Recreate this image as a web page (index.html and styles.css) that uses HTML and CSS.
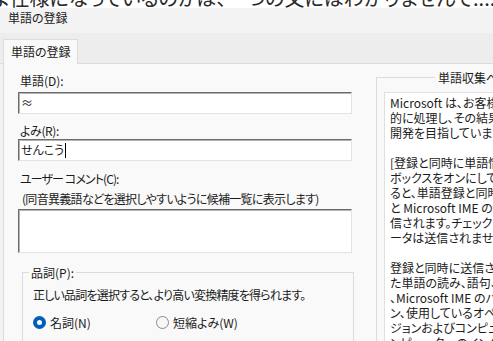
FILE: index.html
```html
<!DOCTYPE html>
<html>
<head>
    <meta charset="utf-8">
    <title>単語の登録</title>
    <link rel="stylesheet" href="styles.css">
</head>
<body>
    <div class="backdrop"><p>よ仕様になっているのかは、一つの文にはわかりませんで......</p></div>

    <div class="dialog">
        <div class="titlebar">単語の登録</div>
        <div class="tabs"><div class="tab">単語の登録</div></div>

        <div class="panel">
            <div class="main">
                <div class="left">
                    <div class="label l1">単語(D):</div>
                    <div class="field f1">≈</div>
                    <div class="label l2">よみ(R):</div>
                    <div class="field f2">せんこう<span class="caret"></span></div>
                    <div class="label l3">ユーザー コメント(C):</div>
                    <div class="hint">(同音異義語などを選択しやすいように候補一覧に表示します)</div>
                    <div class="field memo"></div>

                    <fieldset class="pos">
                        <legend>品詞(P):</legend>
                        <div class="pos-body">
                            <div class="pos-note">正しい品詞を選択すると、より高い変換精度を得られます。</div>
                            <div class="radios">
                                <span class="opt first"><span class="radio on"></span>名詞(N)</span>
                                <span class="opt"><span class="radio"></span>短縮よみ(W)</span>
                            </div>
                        </div>
                    </fieldset>
                </div>

                <fieldset class="collect">
                    <legend>単語収集への協力</legend>
                    <div class="notice">
                        Microsoft は、お客様から送信された単語情報を統計<br>
                        的に処理し、その結果を製品の改善に役立て、より良い IME の<br>
                        開発を目指しています。<br>
                        <br>
                        [登録と同時に単語情報を送信する] チェック<br>
                        ボックスをオンにして [登録] をクリックす<br>
                        ると、単語登録と同時に入力された単語情報<br>
                        と Microsoft IME の情報が Microsoft に送<br>
                        信されます。チェック ボックスがオフの場合、デ<br>
                        ータは送信されません。<br>
                        <br>
                        登録と同時に送信される情報には、入力され<br>
                        た単語の読み、語句、品詞、ユーザー コメント<br>
                        、Microsoft IME のバージョン、辞書のバージョ<br>
                        ン、使用しているオペレーティング システムのバー<br>
                        ジョンおよびコンピューターの種類、お使いのコ<br>
                        ンピューターのインターネット プロトコル
                    </div>
                </fieldset>
            </div>
        </div>
    </div>
</body>
</html>
```

FILE: styles.css
```css
html, body {
    margin: 0;
    padding: 0;
    overflow: hidden;
    background: #fff;}

body {
    font-family: "Noto Sans CJK JP", sans-serif;
    font-size: 12px;
    line-height: 15px;
    font-feature-settings: "palt";
    color: #1b1b1b;}

/* 後ろのウィンドウの文字 */
.backdrop {
    height: 8px;
    overflow: hidden;}

.backdrop p {
    margin: -14px 0 0 -8px;
    font-size: 20px;
    line-height: 24px;
    white-space: nowrap;
    color: #2a2a2a;}

.dialog {
    background: #f3f3f3;}

.titlebar {
    height: 25px;
    box-sizing: border-box;
    padding: 2px 0 0 8px;}

.tabs {
    height: 31px;
    box-sizing: border-box;
    padding-left: 3px;
    display: flex;
    align-items: flex-end;
    background: #ededed;
    border-bottom: 1px solid #dcdcdc;}

.tab {
    height: 25px;
    box-sizing: border-box;
    margin-bottom: -1px;
    padding: 4px 6px 0 7px;
    background: #f9f9f9;
    border: 1px solid #dcdcdc;
    border-bottom: none;}

.panel {
    margin-left: 3px;
    height: 300px;
    background: #f9f9f9;
    border-left: 1px solid #dcdcdc;}

.main {
    display: flex;
    align-items: flex-start;}

.left {
    width: 334px;
    flex: none;
    padding: 9px 0 0 14px;}

.label {
    padding-left: 2px;}

.field {
    height: 22px;
    box-sizing: border-box;
    padding-left: 2px;
    line-height: 20px;
    background: #fff;
    border: 1px solid #e3e3e3;
    border-top-color: #6b6b6b;
    border-left-color: #6b6b6b;
    box-shadow: inset 1px 1px #b4b4b4;}

.f1 { margin-top: 4px; }
.l2 { margin-top: 9px; letter-spacing: -0.4px; }
.f2 { margin-top: 1px; }
.l3 { margin-top: 10px; letter-spacing: -0.9px; }

.caret {
    display: inline-block;
    width: 1px;
    height: 15px;
    margin-left: 1px;
    vertical-align: -3px;
    background: #000;}

.hint {
    margin-top: 5px;
    padding-left: 4px;
    letter-spacing: -0.7px;
    white-space: nowrap;}

.memo {
    margin-top: 3px;
    height: 44px;}

fieldset {
    padding: 0;
    border: 1px solid #dcdcdc;
    min-width: 0;}

.pos {
    margin: 12px -2px 0 4px;}

.pos legend {
    margin-left: 6px;
    padding: 0 2px;}

.pos-body {
    padding: 7px 0 12px 10px;}

.pos-note {
    letter-spacing: -0.8px;
    white-space: nowrap;}

.radios {
    margin-top: 13px;
    display: flex;}

.opt {
    display: inline-flex;
    align-items: center;}

.opt.first {
    width: 123px;}

.radio {
    width: 13px;
    height: 13px;
    box-sizing: border-box;
    margin-right: 4px;
    border-radius: 50%;
    border: 1px solid #8a8a8a;
    background: #f7f7f7;}

.radio.on {
    border: 4px solid #005fb8;
    background: #fff;}

.collect {
    width: 260px;
    flex: none;
    margin: 6px 0 0 24px;}

.collect legend {
    margin-left: 58px;
    padding: 0 3px;
    white-space: nowrap;}

.notice {
    margin: 7px 0 0 7px;
    height: 300px;
    padding: 2px 0 0 5px;
    background: #fff;
    border: 1px solid #e0e0e0;
    white-space: nowrap;
    overflow: hidden;}
```
